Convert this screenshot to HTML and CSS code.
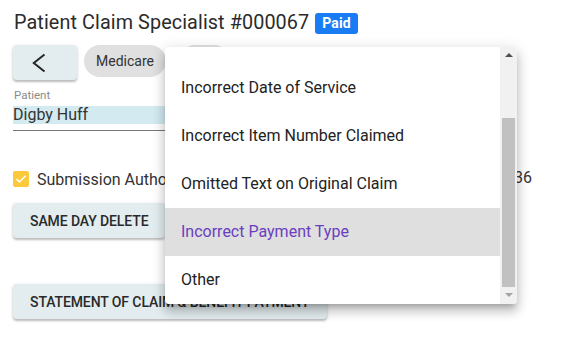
FILE: index.html
```html
<!DOCTYPE html>
<html>
<head>
<meta charset="utf-8">
<link rel="stylesheet" href="styles.css">
</head>
<body>
<div class="page">
  <h1 class="title">Patient Claim Specialist #000067 <span class="badge">Paid</span></h1>
  <div class="toolbar">
    <button class="back" aria-label="Back">
      <svg width="64" height="35" viewBox="0 0 64 35"><path d="M31.5 9.5 20.8 18 31.5 26.5" fill="none" stroke="#262626" stroke-width="2"/></svg>
    </button>
    <span class="chip">Medicare</span>
    <span class="chip chip2">DVA</span>
  </div>
  <div class="field">
    <div class="label">Patient</div>
    <div class="input">Digby Huff</div>
  </div>
  <div class="checkrow">
    <span class="check"><svg width="16" height="16" viewBox="0 0 16 16"><path d="M3.5 8.2 6.5 11l6-6.2" fill="none" stroke="#fff" stroke-width="1.6"/></svg></span>
    <span class="checktext">Submission Authority Provided</span>
    <span class="num">36</span>
  </div>
  <button class="btn">Same Day Delete</button>
  <button class="btn btn-wide">Statement of Claim &amp; Benefit Payment</button>
</div>

<div class="menu">
  <div class="menu-list">
    <div class="menu-spacer"></div>
    <div class="item">Incorrect Date of Service</div>
    <div class="item">Incorrect Item Number Claimed</div>
    <div class="item">Omitted Text on Original Claim</div>
    <div class="item active">Incorrect Payment Type</div>
    <div class="item">Other</div>
  </div>
  <div class="scrollbar">
    <div class="arrow up"></div>
    <div class="track"><div class="thumb"></div></div>
    <div class="arrow down"></div>
  </div>
</div>
</body>
</html>
```
FILE: styles.css
```css
* { box-sizing: border-box; }
html, body { margin: 0; padding: 0; background: #fff; }
body {
  font-family: Roboto, "Noto Sans", sans-serif;
  color: #333;
  width: 568px;
  height: 338px;
  overflow: hidden;
  position: relative;
}
.page {
  padding: 9px 13px 0 13px;
  display: flex;
  flex-direction: column;
  align-items: flex-start;
}
.title {
  margin: 0 0 0 1px;
  font-size: 19.8px;
  font-weight: 400;
  line-height: 28px;
  color: #2b2b2b;
  display: flex;
  align-items: center;
  gap: 6px;
  letter-spacing: 0.1px;
  white-space: nowrap;
}
.badge {
  background: #1a7cf2;
  color: #fff;
  font-size: 14px;
  font-weight: 700;
  border-radius: 3px;
  padding: 0 7px;
  line-height: 21px;
  height: 21px;
  margin-top: 1px;
}
.toolbar {
  margin-top: 8px;
  display: flex;
  align-items: flex-start;
  gap: 7px;
}
.back {
  width: 64px;
  height: 35px;
  border: none;
  border-radius: 4px;
  background: #e3ecef;
  box-shadow: 0 2px 2px rgba(0,0,0,.2), 0 1px 4px rgba(0,0,0,.12);
  display: block;
  padding: 0;
}
.back svg { display: block; }
.chip {
  height: 32px;
  line-height: 32px;
  padding: 0 12px;
  border-radius: 16px;
  background: #e0e0e0;
  font-size: 14px;
  color: #333;
}
.chip2 { margin-left: 6px; }
.field {
  margin-top: 7px;
  width: 340px;
  border-bottom: 1px solid #777;
  padding-bottom: 6px;
}
.label {
  font-size: 11.5px;
  color: #8a8a8a;
  line-height: 16px;
  padding-left: 1px;
}
.input {
  margin-top: 3px;
  background: #d3eaf1;
  font-size: 16px;
  line-height: 18px;
  height: 18px;
  color: #333;
}
.checkrow {
  margin-top: 39px;
  display: flex;
  align-items: center;
  width: 100%;
  height: 18px;
}
.check {
  width: 16px;
  height: 16px;
  background: #fbc93b;
  border-radius: 2px;
  display: flex;
}
.checktext {
  margin-left: 8px;
  font-size: 16px;
  color: #333;
  width: 128px;
  white-space: nowrap;
  overflow: hidden;
}
.num {
  margin-left: auto;
  margin-right: 23px;
  font-size: 16px;
  color: #333;
  margin-top: -4px;
}
.btn {
  margin-top: 15px;
  height: 35px;
  border: none;
  border-radius: 4px;
  background: #e3ecef;
  box-shadow: 0 2px 2px rgba(0,0,0,.2), 0 1px 4px rgba(0,0,0,.12);
  font-family: Roboto, sans-serif;
  font-weight: 500;
  font-size: 14px;
  letter-spacing: -0.1px;
  text-transform: uppercase;
  color: #2a2a2a;
  padding: 0 17px;
  width: 152px;
  text-align: left;
  white-space: nowrap;
  overflow: hidden;
}
.btn-wide {
  margin-top: 46px;
  width: 314px;
}
.menu {
  position: absolute;
  left: 165px;
  top: 47px;
  width: 352px;
  height: 257px;
  background: #fff;
  border-radius: 4px;
  box-shadow: 0 5px 5px -3px rgba(0,0,0,.2), 0 8px 10px 1px rgba(0,0,0,.14), 0 3px 14px 2px rgba(0,0,0,.12);
  display: flex;
  overflow: hidden;
}
.menu-list {
  flex: 1;
  display: flex;
  flex-direction: column;
}
.menu-spacer { height: 17px; flex: none; }
.item {
  height: 48px;
  flex: none;
  display: flex;
  align-items: center;
  padding-left: 16px;
  padding-bottom: 1px;
  font-size: 16px;
  color: #222;
}
.item.active {
  background: #dfdfdf;
  color: #6a3ec0;
}
.scrollbar {
  width: 17px;
  background: #f1f1f1;
  display: flex;
  flex-direction: column;
}
.arrow {
  height: 17px;
  flex: none;
  position: relative;
}
.arrow::after {
  content: "";
  position: absolute;
  left: 5px;
  width: 0;
  height: 0;
  border-left: 4px solid transparent;
  border-right: 4px solid transparent;
}
.arrow.up::after { top: 6px; border-bottom: 4px solid #505050; }
.arrow.down::after { top: 6px; border-top: 4px solid #a3a3a3; }
.track {
  flex: 1;
  padding: 54px 2px 0 2px;
}
.thumb {
  height: 169px;
  background: #c1c1c1;
}
```
